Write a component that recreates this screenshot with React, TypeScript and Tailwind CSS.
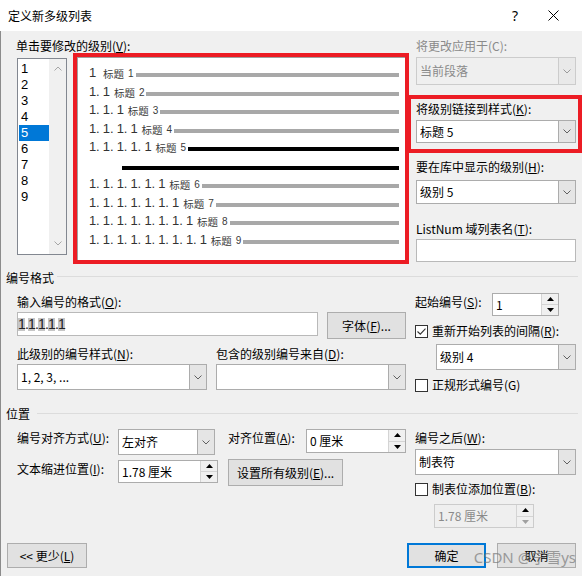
import React from 'react';

const F = "font-['Noto_Sans_CJK_SC','Noto_Sans',sans-serif]";

function Chevron({ color = '#606060', up = false }: { color?: string; up?: boolean }) {
  return (
    <svg width="8" height="5" viewBox="0 0 8 5">
      <path d={up ? 'M0.5 4.5 L4 1 L7.5 4.5' : 'M0.5 0.5 L4 4 L7.5 0.5'} fill="none" stroke={color} strokeWidth="1" />
    </svg>
  );
}

function Tri({ up = false, color = '#000' }: { up?: boolean; color?: string }) {
  return (
    <svg width="7" height="4" viewBox="0 0 7 4">
      <path d={up ? 'M0 4 L3.5 0 L7 4 Z' : 'M0 0 L7 0 L3.5 4 Z'} fill={color} />
    </svg>
  );
}

function Combo({ className, text, disabled }: { className: string; text?: string; disabled?: boolean }) {
  return (
    <div className={`flex border ${disabled ? 'bg-[#efefef] border-[#cccccc]' : 'bg-white border-[#acacac]'} ${className}`}>
      <div className={`flex-1 flex items-center pl-[3px] text-[12px] ${disabled ? 'text-[#8a8a8a]' : 'text-black'}`}>{text}</div>
      <div className={`w-[17px] flex items-center justify-center border-l ${disabled ? 'border-[#cccccc] bg-[#e9e9e9]' : 'border-[#acacac] bg-[#e5e5e5]'}`}>
        <Chevron color={disabled ? '#9a9a9a' : '#606060'} />
      </div>
    </div>
  );
}

function Spinner({ className, text, disabled }: { className: string; text: string; disabled?: boolean }) {
  return (
    <div className={`flex border ${disabled ? 'border-[#cccccc] bg-[#efefef]' : 'border-[#acacac] bg-white'} ${className}`}>
      <div className={`flex-1 flex items-center pl-[3px] text-[12px] ${disabled ? 'text-[#8a8a8a]' : 'text-black'}`}>{text}</div>
      <div className="w-[17px] flex flex-col border-l border-[#d4d4d4] bg-[#f0f0f0]">
        <div className="flex-1 flex items-center justify-center border-b border-[#d4d4d4]"><Tri up /></div>
        <div className="flex-1 flex items-center justify-center"><Tri color={disabled ? '#a0a0a0' : '#000'} /></div>
      </div>
    </div>
  );
}

function Check({ checked }: { checked?: boolean }) {
  return (
    <div className="w-[13px] h-[13px] border border-[#333333] bg-white flex items-center justify-center shrink-0">
      {checked && (
        <svg width="9" height="7" viewBox="0 0 9 7">
          <path d="M0.5 3.5 L3.3 6.2 L8.5 0.6" stroke="#333" fill="none" strokeWidth="1.1" />
        </svg>
      )}
    </div>
  );
}

function Btn({ className, children }: { className: string; children: React.ReactNode }) {
  return (
    <div className={`flex items-center justify-center bg-[#e1e1e1] text-[12px] ${className}`}>{children}</div>
  );
}

function PRow({ n }: { n: number }) {
  const num = Array.from({ length: n }, () => '1').join('. ');
  const black = n === 5;
  return (
    <div className="h-[18.5px] flex items-center">
      <span className="font-['Liberation_Sans',sans-serif] text-[13px] leading-[16px] tracking-[-0.2px] text-[#333333] whitespace-pre">{num}</span>
      <span className={`${n === 1 ? 'ml-[7px]' : 'ml-[4px]'} text-[10.5px] leading-[12px] text-[#3a3a3a] mt-[2px]`}>标题</span>
      <span className="ml-[4px] text-[10px] leading-[12px] text-[#3a3a3a] font-['Liberation_Sans',sans-serif] mt-[2px]">{n}</span>
      <div className={`ml-[2px] flex-1 h-[4px] mt-[4px] ${black ? 'bg-black' : 'bg-[#a8a8a8]'}`} />
    </div>
  );
}

export default function App() {
  const items = [1, 2, 3, 4, 5, 6, 7, 8, 9];
  return (
    <div className={`w-[582px] h-[576px] bg-[#f0f0f0] text-black relative overflow-hidden ${F}`}>
      {/* title bar */}
      <div className="h-[31px] bg-white flex items-center">
        <span className="ml-[8px] text-[12px] leading-[16px]">定义新多级列表</span>
        <span className="ml-auto text-[14px] leading-[16px] font-['Noto_Sans',sans-serif]">?</span>
        <svg className="ml-[30px] mr-[23px]" width="11" height="11" viewBox="0 0 11 11">
          <path d="M0.5 0.5 L10.5 10.5 M10.5 0.5 L0.5 10.5" stroke="#000" strokeWidth="1" />
        </svg>
      </div>

      {/* body */}
      <div className="h-[545px] border-l border-[#8c8c8c] flex flex-col">
        {/* top section */}
        <div className="flex pl-[15px]">
          <div className="flex flex-col w-[393px]">
            <div className="mt-[7px] h-[16px] leading-[16px] text-[12px]">单击要修改的级别(<u>V</u>):</div>
            <div className="flex items-start -mt-[1px]">
              <div className="ml-[1px] mt-[5px] w-[50px] h-[197px] border border-[#828790] bg-white flex">
                <div className="flex-1 flex flex-col pt-[2px]">
                  {items.map((n) => (
                    <div
                      key={n}
                      className={`h-[16px] leading-[16px] text-[13px] font-['Liberation_Sans',sans-serif] ${n === 5 ? 'bg-[#0078d7] text-white ml-[1px] pl-[2px]' : 'pl-[3px]'}`}
                    >
                      {n}
                    </div>
                  ))}
                </div>
                <div className="w-[17px] bg-[#f0f0f0] flex flex-col justify-between items-center pt-[7px] pb-[8px]">
                  <Chevron up color="#a6a6a6" />
                  <Chevron color="#a6a6a6" />
                </div>
              </div>
              <div className="ml-[6px] w-[336px] h-[211px] border-4 border-[#ec1c24]">
                <div className="w-full h-full bg-white border-t border-l border-[#a0a0a0] pt-[6px] pl-[11px] pr-[6px] flex flex-col">
                  <PRow n={1} />
                  <PRow n={2} />
                  <PRow n={3} />
                  <PRow n={4} />
                  <PRow n={5} />
                  <div className="h-[18.5px] flex items-center">
                    <div className="ml-[33px] flex-1 h-[4px] mt-[4px] bg-black" />
                  </div>
                  <PRow n={6} />
                  <PRow n={7} />
                  <PRow n={8} />
                  <PRow n={9} />
                </div>
              </div>
            </div>
          </div>

          <div className="ml-[7px] w-[160px] flex flex-col">
            <div className="mt-[7px] h-[16px] leading-[16px] text-[12px] text-[#8a8a8a]">将更改应用于(C):</div>
            <Combo className="mt-[3px] h-[28px]" text="当前段落" disabled />
            <div className="mt-[10px] -ml-[9px] w-[175px] border-4 border-[#ec1c24] pl-[5px] pr-[2px] pt-[2px] pb-[6px]">
              <div className="h-[16px] leading-[16px] text-[12px]">将级别链接到样式(<u>K</u>):</div>
              <Combo className="mt-[3px] h-[23px]" text="标题 5" />
            </div>
            <div className="mt-[6px] h-[16px] leading-[16px] text-[12px]">要在库中显示的级别(<u>H</u>):</div>
            <Combo className="mt-[5px] h-[24px]" text="级别 5" />
            <div className="mt-[17px] h-[16px] leading-[16px] text-[12px]">ListNum 域列表名(<u>T</u>):</div>
            <div className="mt-[2px] h-[23px] border border-[#b9b9b9] bg-white" />
          </div>
        </div>

        {/* 编号格式 */}
        <div className="mt-[6px] flex items-start pl-[5px] pr-[4px]">
          <span className="text-[12px] leading-[16px]">编号格式</span>
          <div className="flex-1 h-px bg-[#dcdcdc] mt-[6px] ml-[3px]" />
        </div>
        <div className="flex pl-[16px] items-start">
          <div className="w-[389px] flex flex-col">
            <div className="mt-[8px] h-[16px] leading-[16px] text-[12px]">输入编号的格式(<u>O</u>):</div>
            <div className="mt-[2px] flex items-start">
              <div className="w-[301px] h-[24px] border border-[#b9b9b9] bg-white flex items-center font-['Liberation_Sans',sans-serif] text-[14px] text-[#222]">
                {[0, 1, 2, 3, 4].map((i) => (
                  <React.Fragment key={i}>
                    {i > 0 && <span className="inline-block w-[3px] text-center leading-[13px]">.</span>}
                    <span className="inline-block w-[7px] h-[13px] leading-[13px] bg-[#c6c6c6] text-center">1</span>
                  </React.Fragment>
                ))}
              </div>
              <Btn className="ml-[9px] w-[79px] h-[27px] border border-[#adadad]">字体(<u>F</u>)...</Btn>
            </div>
            <div className="mt-[7px] flex h-[16px] leading-[16px] text-[12px]">
              <span className="w-[199px]">此级别的编号样式(<u>N</u>):</span>
              <span>包含的级别编号来自(<u>D</u>):</span>
            </div>
            <div className="mt-[2px] flex">
              <Combo className="w-[190px] h-[26px]" text="1, 2, 3, ..." />
              <Combo className="ml-[9px] w-[190px] h-[26px]" />
            </div>
          </div>

          <div className="ml-[9px] w-[161px] flex flex-col">
            <div className="mt-[7px] flex items-start">
              <span className="w-[77px] mt-[1px] h-[16px] leading-[16px] text-[12px]">起始编号(<u>S</u>):</span>
              <Spinner className="w-[67px] h-[23px]" text="1" />
            </div>
            <div className="mt-[7px] h-[16px] flex items-center text-[12px]">
              <Check checked />
              <span className="ml-[4px] leading-[16px] whitespace-nowrap">重新开始列表的间隔(<u>R</u>):</span>
            </div>
            <Combo className="mt-[5px] ml-[21px] w-[140px] h-[26px]" text="级别 4" />
            <div className="mt-[7px] h-[16px] flex items-center text-[12px]">
              <Check />
              <span className="ml-[4px] leading-[16px]">正规形式编号(G)</span>
            </div>
          </div>
        </div>

        {/* 位置 */}
        <div className="mt-[13px] flex items-start pl-[5px] pr-[4px]">
          <span className="text-[12px] leading-[16px]">位置</span>
          <div className="flex-1 h-px bg-[#dcdcdc] mt-[7px] ml-[7px]" />
        </div>
        <div className="flex pl-[16px] items-start">
          <div className="w-[389px] flex flex-col">
            <div className="mt-[7px] flex items-start text-[12px]">
              <span className="w-[101px] mt-[1px] h-[16px] leading-[16px]">编号对齐方式(<u>U</u>):</span>
              <Combo className="w-[97px] h-[26px]" text="左对齐" />
              <span className="ml-[13px] w-[78px] mt-[1px] h-[16px] leading-[16px]">对齐位置(<u>A</u>):</span>
              <Spinner className="w-[100px] h-[24px]" text="0 厘米" />
            </div>
            <div className="mt-[4px] flex items-start text-[12px]">
              <span className="w-[101px] mt-[2px] h-[16px] leading-[16px]">文本缩进位置(<u>I</u>):</span>
              <Spinner className="mt-[1px] w-[100px] h-[23px]" text="1.78 厘米" />
              <Btn className="ml-[10px] w-[115px] h-[27px] border border-[#adadad]">设置所有级别(<u>E</u>)...</Btn>
            </div>
          </div>
          <div className="ml-[9px] w-[161px] flex flex-col">
            <div className="mt-[8px] h-[16px] leading-[16px] text-[12px]">编号之后(<u>W</u>):</div>
            <Combo className="mt-[3px] h-[26px]" text="制表符" />
            <div className="mt-[6px] h-[16px] flex items-center text-[12px]">
              <Check />
              <span className="ml-[4px] leading-[16px]">制表位添加位置(<u>B</u>):</span>
            </div>
            <Spinner className="mt-[7px] ml-[19px] w-[100px] h-[24px]" text="1.78 厘米" disabled />
          </div>
        </div>

        {/* bottom buttons */}
        <div className="mt-[15px] flex pl-[6px] pr-[6px]">
          <Btn className="w-[80px] h-[25px] border border-[#adadad]">&lt;&lt; 更少(<u>L</u>)</Btn>
          <Btn className="ml-auto w-[79px] h-[25px] border-2 border-[#0078d7]">确定</Btn>
          <Btn className="ml-[11px] w-[79px] h-[25px] border border-[#adadad]">取消</Btn>
        </div>
      </div>

      <div className="absolute right-[6px] bottom-[10px] text-[15px] leading-[18px] text-[#7a7a7a] opacity-70 font-['Noto_Sans','Noto_Sans_CJK_SC',sans-serif] pointer-events-none">
        CSDN @宁雪ys
      </div>
    </div>
  );
}
